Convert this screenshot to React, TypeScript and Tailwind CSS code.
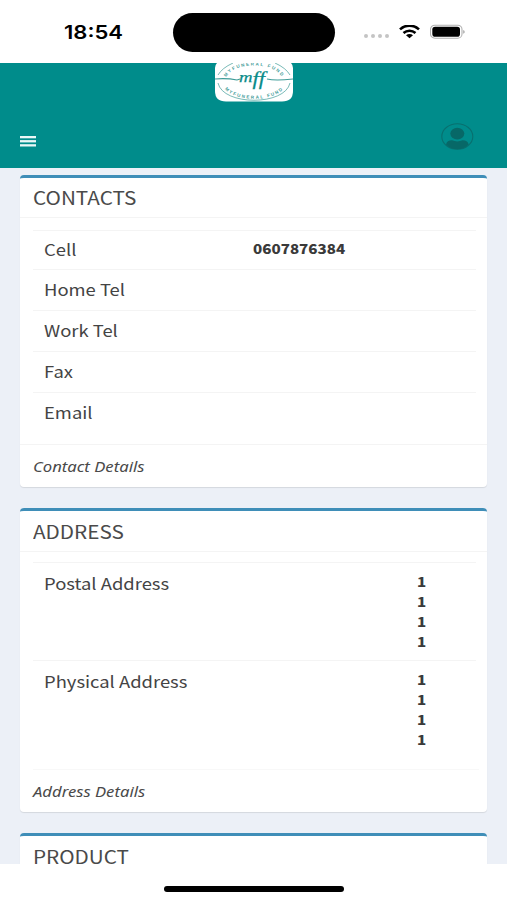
import type { ReactNode } from "react";

type Row = {
  label: string;
  values?: string[];
};

function StatusBar() {
  return (
    <div className="relative h-[63px] shrink-0 bg-white">
      <span className="absolute left-[64px] top-[20px] origin-left scale-x-[1.16] font-['Inter'] text-[19px] leading-[25px] font-semibold text-black">
        18:54
      </span>
      <div className="absolute left-[173px] top-[13px] h-[39px] w-[162px] rounded-full bg-black" />
      <div className="absolute left-[364px] top-[34px] flex gap-[3px]">
        {[0, 1, 2, 3].map((i) => (
          <span key={i} className="h-[4px] w-[4px] rounded-full bg-[#c4c4c4]" />
        ))}
      </div>
      <svg className="absolute left-[399px] top-[25px]" width="21" height="14" viewBox="0 0 21 14" fill="none">
        <path d="M1 4.4C6.5-.6 14.5-.6 20 4.4" stroke="#000" strokeWidth="2.6" />
        <path d="M4.5 8C8 5 13 5 16.5 8" stroke="#000" strokeWidth="2.6" />
        <path d="M10.5 13.3 7 10.3C9 8.6 12 8.6 14 10.3Z" fill="#000" />
      </svg>
      <svg className="absolute left-[430px] top-[24px]" width="36" height="16" viewBox="0 0 36 16" fill="none">
        <rect x=".5" y="1.2" width="31.5" height="13" rx="4.3" stroke="#b0b0b0" strokeWidth="1.1" />
        <rect x="2.3" y="2.7" width="27.7" height="10" rx="2.8" fill="#000" />
        <path d="M33.3 5.9c1.8.8 1.8 3 0 3.8Z" fill="#999" />
      </svg>
    </div>
  );
}

function Logo() {
  return (
    <svg className="block" width="78" height="39" viewBox="0 0 78 39" fill="none">
      <path d="M2 0H76Q78 2 78 5V28Q78 38.5 67 38.5H11Q0 38.5 0 28V5Q0 2 2 0Z" fill="#fff" />
      <g stroke="#3f9c98" strokeWidth=".7">
        <path d="M3 12Q7 5 18 0M75 12Q71 5 60 0" />
        <path d="M3 20C8 43 70 43 75 20" />
        <path d="M0 16Q12 15 22 17L25 16M52 16Q60 18 78 16" strokeWidth="1.1" />
      </g>
      <path id="top" d="M11 14C20-1.5 58-1.5 67 14" />
      <path id="bottom" d="M10 26C20 39 58 39 68 26" />
      <g fill="#3f9c98" fontFamily="Liberation Sans, sans-serif" fontSize="4.5" fontWeight="700">
        <text>
          <textPath href="#top" textLength="62">MYFUNERAL FUND</textPath>
        </text>
        <text>
          <textPath href="#bottom" textLength="62">MYFUNERAL FUND</textPath>
        </text>
      </g>
      <text
        x="24"
        y="18.5"
        fill="#078b89"
        stroke="#078b89"
        strokeWidth=".25"
        fontFamily="Liberation Serif, serif"
        fontSize="18"
        fontStyle="italic"
        textLength="26"
        lengthAdjust="spacingAndGlyphs"
      >
        <tspan fontSize="15">m</tspan>
        <tspan dy="3">ff</tspan>
      </text>
    </svg>
  );
}

function Header() {
  return (
    <header className="relative h-[105px] shrink-0 bg-[#008c8b]">
      <div className="absolute left-[215px] top-0">
        <Logo />
      </div>
      <button className="absolute left-[20px] top-[73px]" aria-label="Menu">
        <svg width="16" height="11" viewBox="0 0 16 11" fill="#e9f8f7">
          <rect width="16" height="2.3" />
          <rect y="4.1" width="16" height="2.3" />
          <rect y="8.2" width="16" height="2.3" />
        </svg>
      </button>
      <svg className="absolute left-[441px] top-[60px]" width="33" height="28" viewBox="0 0 33 28" fill="none">
        <ellipse cx="16.3" cy="13.5" rx="15.5" ry="12.7" stroke="#08706f" strokeWidth="1.1" />
        <ellipse cx="16.3" cy="10.6" rx="7" ry="5.9" fill="#076867" />
        <path d="M5 21.5Q6 17.3 11 17.3Q16.3 19.5 21.6 17.3Q26.6 17.3 27.6 21.5C22 27.8 10.6 27.8 5 21.5Z" fill="#076867" />
      </svg>
    </header>
  );
}

function Title({ children }: { children: ReactNode }) {
  return (
    <div className="h-[40px] border-b border-[#f4f4f4] pl-[13px]">
      <h3 className="block w-fit origin-left scale-x-[1.15] text-[18px] leading-[39px] text-[#4a4a4a]">{children}</h3>
    </div>
  );
}

function Label({ children }: { children: ReactNode }) {
  return (
    <span className="block w-fit origin-left scale-x-[1.15] text-[16px] leading-[20px] whitespace-nowrap text-[#444]">
      {children}
    </span>
  );
}

function Footer({ children }: { children: ReactNode }) {
  return (
    <span className="block w-fit origin-left scale-x-[1.19] font-['Noto_Sans'] text-[14px] leading-[43px] text-[#4a4a4a] italic">
      {children}
    </span>
  );
}

function Value({ children }: { children: ReactNode }) {
  return (
    <b className="block h-[20px] w-fit origin-left scale-x-[1.165] text-[13px] leading-[18px] font-black text-[#3a3a3a]">
      {children}
    </b>
  );
}

const box = "rounded-[4px] border-t-[3px] border-[#3f8eb8] bg-white shadow-[0_1px_1px_rgba(0,0,0,0.1)]";

const contacts: Row[] = [
  { label: "Cell", values: ["0607876384"] },
  { label: "Home Tel" },
  { label: "Work Tel" },
  { label: "Fax" },
  { label: "Email" },
];

const addresses: Row[] = [
  { label: "Postal Address", values: ["1", "1", "1", "1"] },
  { label: "Physical Address", values: ["1", "1", "1", "1"] },
];

export default function App() {
  return (
    <div className="flex h-[900px] w-[507px] flex-col overflow-hidden bg-white font-['Noto_Sans_CJK_JP',sans-serif]">
      <StatusBar />
      <Header />
      <main className="flex h-[696px] shrink-0 flex-col gap-[21px] overflow-hidden bg-[#ecf0f7] px-[20px] pt-[7px]">
        <section className={`${box} h-[312px] shrink-0`}>
          <Title>CONTACTS</Title>
          <div className="mr-[11px] ml-[13px] mt-[12px] h-[214px]">
            {contacts.map((row) => (
              <div
                key={row.label}
                className="flex h-[41px] border-t border-[#f4f4f4] pt-[9px] pl-[10.5px] first:h-[39px] first:pt-[8px]"
              >
                <div className="w-[209px]">
                  <Label>{row.label}</Label>
                </div>
                {row.values?.map((v) => (
                  <div key={v} className="pt-px">
                    <Value>{v}</Value>
                  </div>
                ))}
              </div>
            ))}
          </div>
          <div className="border-t border-[#f4f4f4] pl-[13px]">
            <Footer>Contact Details</Footer>
          </div>
        </section>
        <section className={`${box} h-[304px] shrink-0 pt-px`}>
          <Title>ADDRESS</Title>
          <div className="mr-[11px] ml-[13px] mt-[10px] h-[207px]">
            {addresses.map((row) => (
              <div key={row.label} className="flex h-[98px] border-t border-[#f4f4f4] pt-[10px] pl-[10.5px]">
                <div className="w-[373px]">
                  <Label>{row.label}</Label>
                </div>
                <div>
                  {row.values?.map((v, i) => (
                    <Value key={i}>{v}</Value>
                  ))}
                </div>
              </div>
            ))}
          </div>
          <div className="ml-[13px] mr-[8px] border-t border-[#f8f8f8]">
            <Footer>Address Details</Footer>
          </div>
        </section>
        <section className={`${box} h-[120px] shrink-0 pt-px`}>
          <Title>PRODUCT</Title>
        </section>
      </main>
      <div className="flex h-[36px] shrink-0 justify-center pt-[22px]">
        <div className="h-[6px] w-[180px] rounded-full bg-black" />
      </div>
    </div>
  );
}
